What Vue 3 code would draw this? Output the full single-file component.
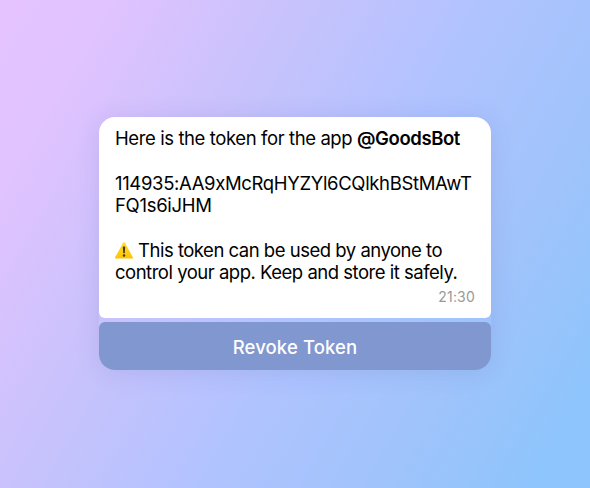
<script setup>
const token = ['114935:AA9xMcRqHYZYl6CQlkhBStMAwT', 'FQ1s6iJHM']
</script>

<template>
  <main class="scene">
    <section class="message">
      <div class="bubble">
        <p class="line intro">Here is the token for the app <strong>@GoodsBot</strong></p>
        <p class="line gap token">{{ token[0] }}</p>
        <p class="line">{{ token[1] }}</p>
        <p class="line gap warning">
          <svg class="icon" viewBox="0 0 18 17" aria-hidden="true">
            <defs>
              <linearGradient id="sign" x1="0" y1="0" x2="0" y2="1">
                <stop offset="0" stop-color="#ffdc3c" />
                <stop offset="1" stop-color="#fcc400" />
              </linearGradient>
            </defs>
            <path d="M8.2.6Q9-.2 9.8.6L18 15.6Q18.2 16.6 17.2 16.6H.8Q-.2 16.6 0 15.6Z" fill="url(#sign)" />
            <path d="M7.8 4.8Q9 4 10.2 4.8L9.7 11.2H8.3Z" fill="#43380d" />
            <circle cx="9" cy="13.5" r="1.25" fill="#43380d" />
          </svg>
          <span>This token can be used by anyone to</span>
        </p>
        <p class="line control">control your app. Keep and store it safely.</p>
        <time class="time">21:30</time>
      </div>
      <button class="revoke" type="button">Revoke Token</button>
    </section>
  </main>
</template>

<style>
body {
  margin: 0;
}
</style>

<style scoped>
.scene {
  box-sizing: border-box;
  width: 590px;
  height: 488px;
  padding: 117px 99px 0;
  background: linear-gradient(120deg, #e5c3ff 0%, #e1c3ff 12%, #c9c2fc 33%, #b0c3ff 56%, #9fc3fb 77%, #8ec5fc 93%, #8ec5fc 100%);
  font-family: Inter, "Liberation Sans", sans-serif;
}
.message {
  display: flex;
  flex-direction: column;
  gap: 4px;
  border-radius: 16px;
  box-shadow: 0 2px 24px rgba(70, 80, 150, 0.14);
}
.bubble {
  box-sizing: border-box;
  height: 201px;
  padding: 10px 16px 0;
  border-radius: 16px 16px 6px 6px;
  background: #fff;
  color: #000;
}
.line {
  display: flex;
  align-items: center;
  margin: 0;
  height: 22.4px;
  font-size: 18.5px;
  line-height: 22.4px;
  white-space: pre;
  letter-spacing: -0.3px;
}
.gap {
  margin-top: 22.4px;
}
.intro {
  letter-spacing: -0.4px;
}
.token {
  letter-spacing: -0.35px;
}
.warning,
.control {
  letter-spacing: -0.49px;
}
strong {
  font-weight: 600;
}
.icon {
  flex: none;
  width: 18px;
  height: 17px;
  margin-right: 5px;
}
.time {
  display: block;
  margin-top: 4px;
  color: #999;
  font-size: 14px;
  line-height: 17px;
  letter-spacing: 0.2px;
  text-align: right;
}
.revoke {
  height: 48px;
  padding: 2px 0 0;
  border: 0;
  border-radius: 6px 6px 16px 16px;
  background: #8197d0;
  color: #fff;
  font: 500 18.5px/46px Inter, "Liberation Sans", sans-serif;
  letter-spacing: 0.12px;
}
</style>
